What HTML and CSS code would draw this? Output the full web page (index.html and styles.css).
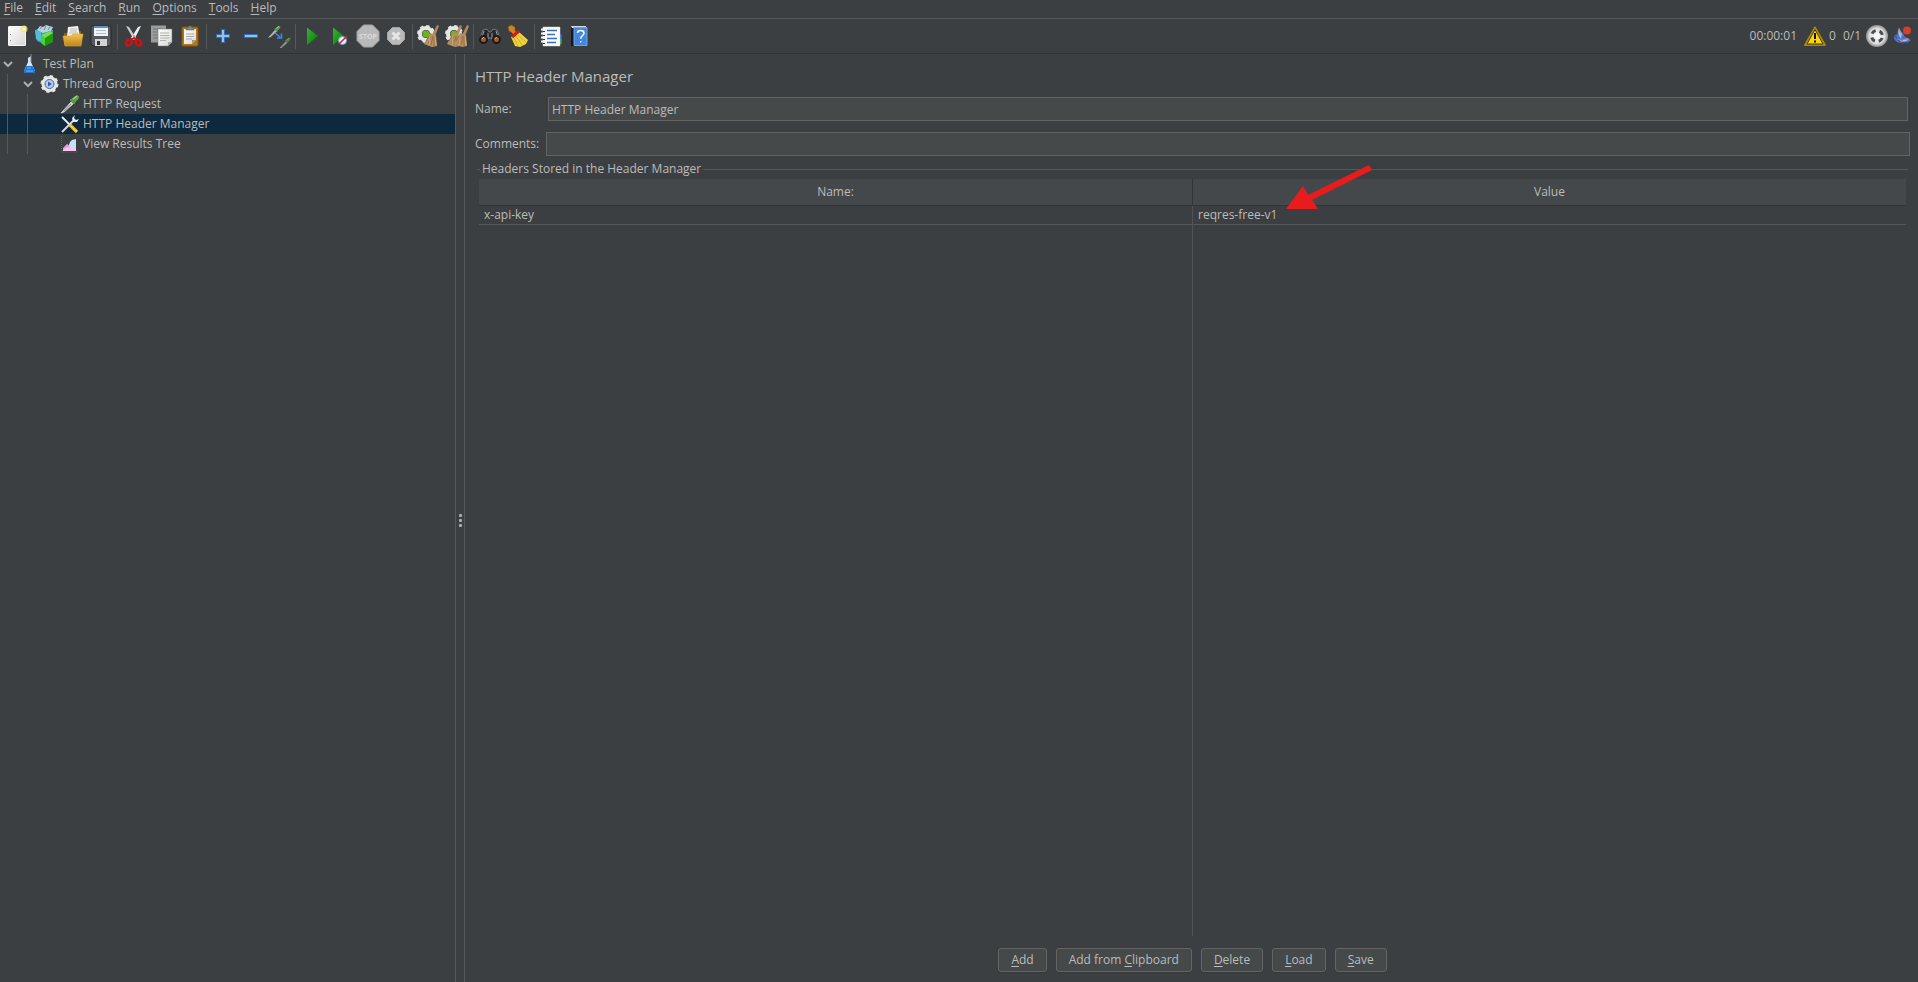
FILE: index.html
```html
<!doctype html>
<html lang="en">

<head>
  <meta charset="UTF-8" />
  <meta name="viewport" content="width=device-width, initial-scale=1.0" />
  <title>HTTP Header Manager</title>
  <link rel="stylesheet" href="styles.css">
</head>

<body>
  <svg class="defs" width="0" height="0" aria-hidden="true">
    <defs>
      <linearGradient id="paper" x1="0" y1="0" x2="1" y2="1">
        <stop offset="0" stop-color="#ffffff" />
        <stop offset="1" stop-color="#d6d6d4" />
      </linearGradient>
      <linearGradient id="gold" x1="0" y1="0" x2="0" y2="1">
        <stop offset="0" stop-color="#f0c35a" />
        <stop offset="1" stop-color="#c08612" />
      </linearGradient>
      <linearGradient id="green" x1="0" y1="0" x2="1" y2="1">
        <stop offset="0" stop-color="#3fae3a" />
        <stop offset="0.5" stop-color="#1b9a14" />
        <stop offset="1" stop-color="#0a6d07" />
      </linearGradient>
      <radialGradient id="silver">
        <stop offset="0" stop-color="#ffffff" />
        <stop offset="0.7" stop-color="#dddddd" />
        <stop offset="1" stop-color="#8c8c8c" />
      </radialGradient>
      <g id="gear">
        <circle r="6" fill="none" stroke="#e4e6e6" stroke-width="4" />
        <circle r="8" fill="none" stroke="#e4e6e6" stroke-width="2" stroke-dasharray="3.3 2.98" />
      </g>
      <g id="broom">
        <path d="M20 1l2 1-4 10-3-1z" fill="#b08a5c" />
        <path d="M13 9l6 2 1 11-5 1-8-3z" fill="#b8905f" />
        <path d="M14 12l-3 8M16 12l-2 9M17 13v9M12 12l-3 5" stroke="#7d5a34" stroke-width="0.6" fill="none" />
        <path d="M13 12l-1 9M18 13l1 8" stroke="#dbb98d" stroke-width="0.7" fill="none" />
      </g>
      <g id="pipette">
        <path d="M2 18L11 8l2 2-9 8-3 1z" fill="#c9cdc9" stroke="#f4f4f4" stroke-width="0.6" />
        <path d="M4 17l7-7" stroke="#777" stroke-width="0.8" />
        <path d="M10 6l4 4 1-2 3-3q2-4-2-3l-4 3z" fill="#5c9c48" stroke="#5c9c48" />
        <path d="M13 5l4-3" stroke="#a5d292" stroke-width="1.4" />
      </g>
    </defs>
  </svg>

  <div class="app">
    <nav class="menubar">
      <a href="#"><u>F</u>ile</a>
      <a href="#"><u>E</u>dit</a>
      <a href="#"><u>S</u>earch</a>
      <a href="#"><u>R</u>un</a>
      <a href="#"><u>O</u>ptions</a>
      <a href="#"><u>T</u>ools</a>
      <a href="#"><u>H</u>elp</a>
    </nav>

    <div class="toolbar">
      <button class="tool" aria-label="New">
        <svg viewBox="0 0 24 24">
          <rect x="3.5" y="2.5" width="17" height="19" rx="0.5" fill="url(#paper)" stroke="#f8f8f8" />
          <path d="M5.500 10v1M5.500 16v1" stroke="#999" />
          <circle cx="19" cy="5" r="3.5" fill="#f2e66a" opacity="0.8" />
          <circle cx="19" cy="5" r="1.5" fill="#fffde0" />
        </svg>
      </button>
      <button class="tool" aria-label="Templates">
        <svg viewBox="0 0 24 24">
          <path d="M2 6l9-3 9 3v11l-9 3-7-3z" fill="#2e9dc0" />
          <path d="M2 6l6 2v10l-5-3z" fill="#55bcd8" />
          <path d="M4 6l3-4 3 1 3-2 3 1 4 1-2 4-8 2z" fill="#b9d3da" />
          <path d="M7 5l2-3M11 6l2-4M15 6l2-3" stroke="#5d8fa0" />
          <path d="M8 11l9-4 3 2v9l-8 4-4-3z" fill="#1f990e" />
          <path d="M8 11l4 3v8l-4-3z" fill="#4bd22f" />
          <path d="M8 11l9-4 3 2-8 5z" fill="#7bdd55" />
        </svg>
      </button>
      <button class="tool" aria-label="Open">
        <svg viewBox="0 0 24 24">
          <path d="M3 9h4l1-2h12v14H3z" fill="#8c610c" />
          <path d="M7 3l10-1 2 11H6z" fill="#f3f3f3" />
          <path d="M9 5h7M9 7h7M8 9h9" stroke="#aaa" stroke-width="0.8" />
          <path d="M2 12h8l2-2h10l-2 12H4z" fill="url(#gold)" stroke="#d9a638" stroke-width="0.6" />
        </svg>
      </button>
      <button class="tool" aria-label="Save">
        <svg viewBox="0 0 24 24">
          <path d="M3 2h18l1 1v18l-1 1H4l-2-2V3z" fill="#55585d" stroke="#292929" />
          <path d="M5 2h14v10H5z" fill="#f0f4f8" />
          <path d="M5 2h14v2H5z" fill="#5d91cc" />
          <path d="M7 6.500h10M7 9.500h10" stroke="#b4bcc5" />
          <path d="M6 15h12v7H6z" fill="#d2d2d2" />
          <path d="M8 17h3v4H8z" fill="#333" />
        </svg>
      </button>
      <span class="sep"></span>
      <button class="tool" aria-label="Cut">
        <svg viewBox="0 0 24 24">
          <path d="M4 2l3 1 7 11-2 2z" fill="#c9cccc" />
          <path d="M19 2l-3 1-7 11 3 2z" fill="#f0f0f0" />
          <circle cx="12" cy="12" r="0.8" fill="#555" />
          <ellipse cx="7" cy="18.500" rx="2.500" ry="3.300" fill="none" stroke="#d31111" stroke-width="2.400" transform="rotate(35 7 18.500)" />
          <ellipse cx="16.500" cy="18.500" rx="2.500" ry="3.300" fill="none" stroke="#d31111" stroke-width="2.400" transform="rotate(-35 16.500 18.500)" />
          <path d="M9 16l3-2 3 2" stroke="#d31111" stroke-width="2" fill="none" />
        </svg>
      </button>
      <button class="tool" aria-label="Copy">
        <svg viewBox="0 0 24 24">
          <path d="M1 1.500h15v17H1z" fill="#9b9c9c" />
          <path d="M3 5h10M3 8h6M3 11h5M3 14h5" stroke="#747676" />
          <path d="M8 5h14v13l-4 4H8z" fill="url(#paper)" stroke="#777" stroke-width="0.5" />
          <path d="M10 9h9M10 11.500h9M10 14h9M10 16.500h6" stroke="#b2b2b2" />
          <path d="M22 18h-4v4z" fill="#aaa" />
        </svg>
      </button>
      <button class="tool" aria-label="Paste">
        <svg viewBox="0 0 24 24">
          <rect x="4" y="3" width="16" height="19" rx="1" fill="#b47516" stroke="#8b5508" />
          <path d="M6 5h12v11l-4 4H6z" fill="url(#paper)" />
          <path d="M8 10h8M8 12.500h8M8 15h6" stroke="#aaa" />
          <path d="M18 16h-4v4z" fill="#999" />
          <path d="M8 6V4h2l1-2h2l1 2h2v2z" fill="#85877f" stroke="#5f605b" stroke-width="0.5" />
        </svg>
      </button>
      <span class="sep"></span>
      <button class="tool" aria-label="Expand all">
        <svg viewBox="0 0 24 24">
          <path d="M10.500 5.500h3v5h5v3h-5v5h-3v-5h-5v-3h5z" fill="#8fc2f5" stroke="#2f6fc2" />
        </svg>
      </button>
      <button class="tool" aria-label="Collapse all">
        <svg viewBox="0 0 24 24">
          <rect x="5.500" y="10.500" width="13" height="3" fill="#8fc2f5" stroke="#2f6fc2" />
        </svg>
      </button>
      <button class="tool" aria-label="Toggle">
        <svg viewBox="0 0 24 24">
          <g transform="translate(1 1) scale(0.65)"><use href="#pipette" /></g>
          <g transform="translate(12 13) scale(0.6)" opacity="0.7"><use href="#pipette" /></g>
          <path d="M8 9l5 4M14.500 9.500V14H10" fill="none" stroke="#3e87ea" stroke-width="1.600" />
        </svg>
      </button>
      <span class="sep"></span>
      <button class="tool" aria-label="Start">
        <svg viewBox="0 0 24 24"><path d="M7 3.500L18 12 7 21z" fill="url(#green)" /></svg>
      </button>
      <button class="tool" aria-label="Start no pauses">
        <svg viewBox="0 0 24 24">
          <path d="M5 3.500L16 12 5 21z" fill="url(#green)" />
          <circle cx="14.500" cy="16.500" r="4" fill="#e9f2fb" stroke="#6aa0d8" />
          <path d="M11 20l8-8" stroke="#d22727" stroke-width="1.600" />
        </svg>
      </button>
      <button class="tool" aria-label="Stop" disabled>
        <svg viewBox="0 0 24 24">
          <path d="M7.500 1h9L23 7.500v9L16.500 23h-9L1 16.500v-9z" fill="#b9b9b9" stroke="#a4a4a4" />
          <text class="stop-text" x="12" y="15">STOP</text>
        </svg>
      </button>
      <button class="tool" aria-label="Shutdown" disabled>
        <svg viewBox="0 0 24 24">
          <path d="M8.500 3.500h7l5 5v7l-5 5h-7l-5-5v-7z" fill="#b9b9b9" stroke="#a4a4a4" />
          <path d="M8.500 8.500l7 7M15.500 8.500l-7 7" stroke="#e6e6e6" stroke-width="3" />
        </svg>
      </button>
      <span class="sep"></span>
      <button class="tool" aria-label="Clear">
        <svg viewBox="0 0 24 24">
          <g transform="translate(9 10)"><use href="#gear" /><circle r="3.500" fill="#68b61e" /></g>
          <use href="#broom" />
        </svg>
      </button>
      <button class="tool" aria-label="Clear all">
        <svg viewBox="0 0 24 24">
          <g transform="translate(9 10)"><use href="#gear" /><circle r="3.500" fill="#68b61e" /></g>
          <g transform="translate(-5 0)"><use href="#broom" /></g>
          <g transform="translate(2 0)"><use href="#broom" /></g>
        </svg>
      </button>
      <span class="sep"></span>
      <button class="tool" aria-label="Search">
        <svg viewBox="0 0 24 24">
          <path d="M5 6l4-1 2 3h2l2-3 4 1 3 8H2z" fill="#25282a" stroke="#74787a" />
          <path d="M6 7l-2 6M10 9v6M14 9v6M18 7l2 6" stroke="#999ea0" />
          <circle cx="5.500" cy="15.500" r="3.500" fill="#a95a2a" stroke="#1a1a1a" stroke-width="2" />
          <circle cx="18.500" cy="15.500" r="3.500" fill="#a95a2a" stroke="#1a1a1a" stroke-width="2" />
          <path d="M4 15l2-2M17 15l2-2" stroke="#e5a070" />
        </svg>
      </button>
      <button class="tool" aria-label="Reset search">
        <svg viewBox="0 0 24 24">
          <path d="M2 3l3-2 4 2v4l3 2-3 3-4-4-2-1z" fill="#c98525" stroke="#8a540c" stroke-width="0.6" />
          <path d="M13 8l9 8-2 4-6 3-5-1-4-9z" fill="#efd33b" />
          <path d="M8 14l4 8M10 12l6 9M12 11l8 7" stroke="#c4a51c" stroke-width="0.8" fill="none" />
          <path d="M6 13l7-6" stroke="#d41919" stroke-width="3" />
        </svg>
      </button>
      <span class="sep"></span>
      <button class="tool" aria-label="Function helper">
        <svg viewBox="0 0 24 24">
          <path d="M20 10h3v5h-3z" fill="#1b66e0" />
          <path d="M20 15h3v5h-3z" fill="#15a715" />
          <path d="M4 3h17v19H4z" fill="#fbfbfb" stroke="#d2d2d2" stroke-width="0.5" />
          <path d="M8 6.500h10M8 10.500h8M8 14.500h10M8 18.500h9" stroke="#3f6fae" stroke-width="1.300" />
          <path d="M2 5.500h4M2 9.500h4M2 13.500h4M2 17.500h4" stroke="#f3f3f3" stroke-width="2" />
          <path d="M4 7.500h2M4 11.500h2M4 15.500h2M4 19.500h2" stroke="#333" />
        </svg>
      </button>
      <button class="tool" aria-label="Help">
        <svg viewBox="0 0 24 24">
          <path d="M4 3l3-1v20H4z" fill="#15191e" />
          <path d="M4 2h15v2H5z" fill="#d5d9df" />
          <path d="M7 3.500h13v18H7z" fill="#4387dc" stroke="#6aa5ec" />
          <path d="M10.500 9q0-2.500 3-2.500 3.500 0 3.500 2.500 0 1.500-1.800 2.800-1.500 1-1.500 3M13.700 17v1.600" fill="none" stroke="#fff" stroke-width="1.500" />
        </svg>
      </button>

      <div class="status">
        <span class="elapsed">00:00:01</span>
        <button class="tool" aria-label="Log warnings">
          <svg viewBox="0 0 24 24">
            <path d="M12 3.500L22 21H2z" fill="#f2c90d" stroke="#a98a06" stroke-width="1.800" stroke-linejoin="round" />
            <path d="M12 5.500L20 20H4z" fill="#ffd60a" stroke="#42380a" stroke-width="1" />
            <path d="M12 9v6M12 16.500v2" stroke="#111" stroke-width="2" />
          </svg>
        </button>
        <span class="errors">0</span>
        <span class="threads">0/1</span>
        <svg class="status-icon" viewBox="0 0 24 24">
          <circle cx="12" cy="12" r="11" fill="url(#silver)" />
          <circle cx="12" cy="12" r="5.500" fill="none" stroke="#4b4f50" stroke-width="3" stroke-dasharray="4.600 4.040" stroke-dashoffset="-2" />
        </svg>
        <svg class="status-icon" viewBox="0 0 24 24">
          <path d="M3 15q0-5 3-4l1-6 5 4 2 4 6 3q-4 4-11 3-4-1-6-4z" fill="#4e72c4" />
          <path d="M8 4l3 6-1 5q-4-5-2-11zM9 16l9-1q-2 3-9 3z" fill="#9fb9e8" />
          <path d="M4 12l5 6 9 1" fill="none" stroke="#2b4c9e" />
          <path d="M8 4l2 5M6 15l6 2M14 14l4 1" stroke="#da6e59" fill="none" />
          <circle cx="16" cy="6.500" r="4" fill="#d3412e" />
        </svg>
      </div>
    </div>

    <div class="workspace">
      <aside class="tree">
        <div class="node">
          <svg class="chevron" viewBox="0 0 20 20"><path d="M4 8l4 4 4-4" /></svg>
          <svg class="node-icon" viewBox="0 0 20 20">
            <path d="M8 4l3-2v6l4 9v2H4v-2l4-9z" fill="#d8e2ea" />
            <path d="M6.500 12h6l2.500 5v2H4v-2z" fill="#1c73da" />
            <path d="M7 14h4M6 17h7" stroke="#79b9fa" />
            <path d="M11 0v8" stroke="#858b90" />
          </svg>
          <span>Test Plan</span>
        </div>
        <div class="node">
          <i class="guide"></i>
          <svg class="chevron" viewBox="0 0 20 20"><path d="M4 8l4 4 4-4" /></svg>
          <svg class="node-icon" viewBox="0 0 20 20">
            <g transform="translate(9.500 10)">
              <use href="#gear" />
              <circle r="4.500" fill="#b8cbed" stroke="#4b669d" />
              <path d="M-1.500-2.500l4 2.500-4 2.500z" fill="#365ca6" />
            </g>
          </svg>
          <span>Thread Group</span>
        </div>
        <div class="node">
          <i class="guide"></i><i class="guide"></i><i class="blank"></i>
          <svg class="node-icon" viewBox="0 0 20 20"><use href="#pipette" /></svg>
          <span>HTTP Request</span>
        </div>
        <div class="node selected">
          <i class="guide"></i><i class="guide"></i><i class="blank"></i>
          <svg class="node-icon" viewBox="0 0 20 20">
            <path d="M2 3l9 9" stroke="#eee" stroke-width="1.800" />
            <path d="M10 11l7 7" stroke="#f3b80c" stroke-width="3.400" />
            <path d="M2 18l12-12" stroke="#d6d9d9" stroke-width="2" />
            <path d="M15 1l-3 3 1 4 4 0 2-3-3 1-2-2z" fill="#e8eaea" />
            <path d="M11 12l6 6" stroke="#ffe278" />
          </svg>
          <span>HTTP Header Manager</span>
        </div>
        <div class="node">
          <i class="guide"></i><i class="guide"></i><i class="blank"></i>
          <svg class="node-icon" viewBox="0 0 20 20">
            <path d="M1.500 2v16H18" fill="none" stroke="#626668" stroke-dasharray="1 1" />
            <path d="M3 17v-3l4-4 3 2 6-5v10z" fill="#ee9bdc" />
            <path d="M9 11q0-3 3-5l4-1v8l-4 2q-3-1-3-4z" fill="#c4e0fb" />
            <path d="M3 16q5-5 8-1l5-2v4H3z" fill="#f7c7ec" />
          </svg>
          <span>View Results Tree</span>
        </div>
      </aside>

      <div class="divider"><i></i><i></i><i></i></div>

      <main class="panel">
        <h1>HTTP Header Manager</h1>
        <div class="field name-field">
          <label for="name">Name:</label>
          <input id="name" type="text" value="HTTP Header Manager">
        </div>
        <div class="field">
          <label for="comments">Comments:</label>
          <input id="comments" type="text">
        </div>

        <fieldset class="headers">
          <legend>Headers Stored in the Header Manager</legend>
          <table>
            <thead>
              <tr>
                <th>Name:</th>
                <th>Value</th>
              </tr>
            </thead>
            <tbody>
              <tr class="row">
                <td>x-api-key</td>
                <td>
                  <div class="value">reqres-free-v1
                    <svg class="arrow" viewBox="0 0 86 46">
                      <path d="M83 0l3 5-60 30 6 9L0 44 17 21l5 9z" fill="#e81c1c" />
                    </svg>
                  </div>
                </td>
              </tr>
              <tr class="rest">
                <td></td>
                <td></td>
              </tr>
            </tbody>
          </table>
        </fieldset>

        <div class="actions">
          <button><u>A</u>dd</button>
          <button>Add from <u>C</u>lipboard</button>
          <button><u>D</u>elete</button>
          <button><u>L</u>oad</button>
          <button><u>S</u>ave</button>
        </div>
      </main>
    </div>
  </div>
</body>

</html>
```
FILE: styles.css
```css
* {
  box-sizing: border-box;
}

body {
  margin: 0;
  background-color: #3c3f41;
  color: #bbb;
  font-family: "Segoe UI", "Open Sans", "Noto Sans", sans-serif;
  font-size: 12px;
  line-height: 16px;
}

button,
input {
  font: inherit;
  color: inherit;
}

u {
  text-underline-offset: 2px;
}

.defs {
  position: absolute;
}

.app {
  display: flex;
  flex-direction: column;
  height: 100vh;
}

/* menu */
.menubar {
  display: flex;
  gap: 12px;
  height: 19px;
  padding-left: 4px;
  border-bottom: 1px solid #555759;
}

.menubar a {
  color: inherit;
  text-decoration: none;
}

/* toolbar */
.toolbar {
  display: flex;
  align-items: center;
  height: 35px;
  padding: 0 3px;
  border-bottom: 1px solid #323436;
}

.tool {
  display: flex;
  align-items: center;
  justify-content: center;
  width: 28px;
  height: 28px;
  padding: 0;
  border: 0;
  background: none;
}

.tool svg,
.status-icon {
  width: 24px;
  height: 24px;
}

.sep {
  width: 1px;
  height: 25px;
  margin: 0 2px;
  background-color: #55585a;
}

.stop-text {
  fill: #dadada;
  font-size: 7px;
  font-weight: bold;
  text-anchor: middle;
}

.status {
  display: flex;
  align-items: center;
  margin-left: auto;
}

.elapsed {
  margin-right: 4px;
}

.threads {
  margin: 0 4px 0 7px;
}

.status-icon + .status-icon {
  margin-left: 2px;
}

/* test plan tree */
.workspace {
  display: flex;
  flex: 1;
  min-height: 0;
}

.tree {
  width: 455px;
}

.node {
  display: flex;
  align-items: center;
  height: 20px;
}

.node span {
  margin-left: 3px;
  line-height: 18px;
}

.selected {
  background-color: #0d293e;
}

.guide {
  width: 13px;
  height: 20px;
  margin-left: 7px;
  border-left: 1px solid #55585a;
}

.blank {
  width: 20px;
}

.chevron,
.node-icon {
  width: 20px;
  height: 20px;
}

.chevron path {
  fill: none;
  stroke: #adadad;
  stroke-width: 2;
}

.divider {
  display: flex;
  flex-direction: column;
  align-items: center;
  justify-content: center;
  gap: 2px;
  width: 10px;
  padding-top: 4px;
  border: solid #555759;
  border-width: 0 1px;
}

.divider i {
  width: 3px;
  height: 3px;
  border-radius: 1px;
  background-color: #adadad;
}

/* header manager */
.panel {
  display: flex;
  flex: 1;
  flex-direction: column;
  min-width: 0;
  padding: 10px 8px 10px 10px;
}

h1 {
  margin: 0;
  font-size: 15px;
  font-weight: normal;
  line-height: 24px;
}

.field {
  display: flex;
  align-items: center;
  margin-top: 11px;
}

.field label {
  width: 71px;
}

.field input {
  flex: 1;
  height: 24px;
  padding: 0 3px;
  border: 1px solid #646464;
  background-color: #45494a;
}

.name-field {
  margin-top: 9px;
  padding-right: 2px;
}

.name-field label {
  width: 73px;
}

.headers {
  display: flex;
  flex: 1;
  min-width: 0;
  margin: 5px 2px 0;
  padding: 2px 2px 0;
  border: 0;
  border-top: 1px solid #555759;
}

legend {
  margin-left: 1px;
  padding: 0 2px;
}

table {
  width: 100%;
  height: 100%;
  table-layout: fixed;
  border-collapse: collapse;
}

th {
  height: 26px;
  padding: 0;
  border-bottom: 1px solid #323436;
  background-color: #45484a;
  font-weight: normal;
}

th + th {
  border-left: 1px solid #323436;
}

td {
  padding: 0 5px;
}

td + td {
  border-left: 1px solid #505355;
}

.row td {
  height: 19px;
  border-bottom: 1px solid #555759;
}

.value {
  position: relative;
}

/* callout drawn over the value column */
.arrow {
  position: absolute;
  top: -42px;
  left: 88px;
  width: 86px;
  height: 46px;
}

.actions {
  display: flex;
  justify-content: center;
  gap: 9px;
  margin-top: 12px;
}

.actions button {
  height: 24px;
  padding: 0 12px;
  border: 1px solid #646464;
  border-radius: 3px;
  background-color: #45494a;
  box-shadow: 0 1px 0 #36393a;
}
```
